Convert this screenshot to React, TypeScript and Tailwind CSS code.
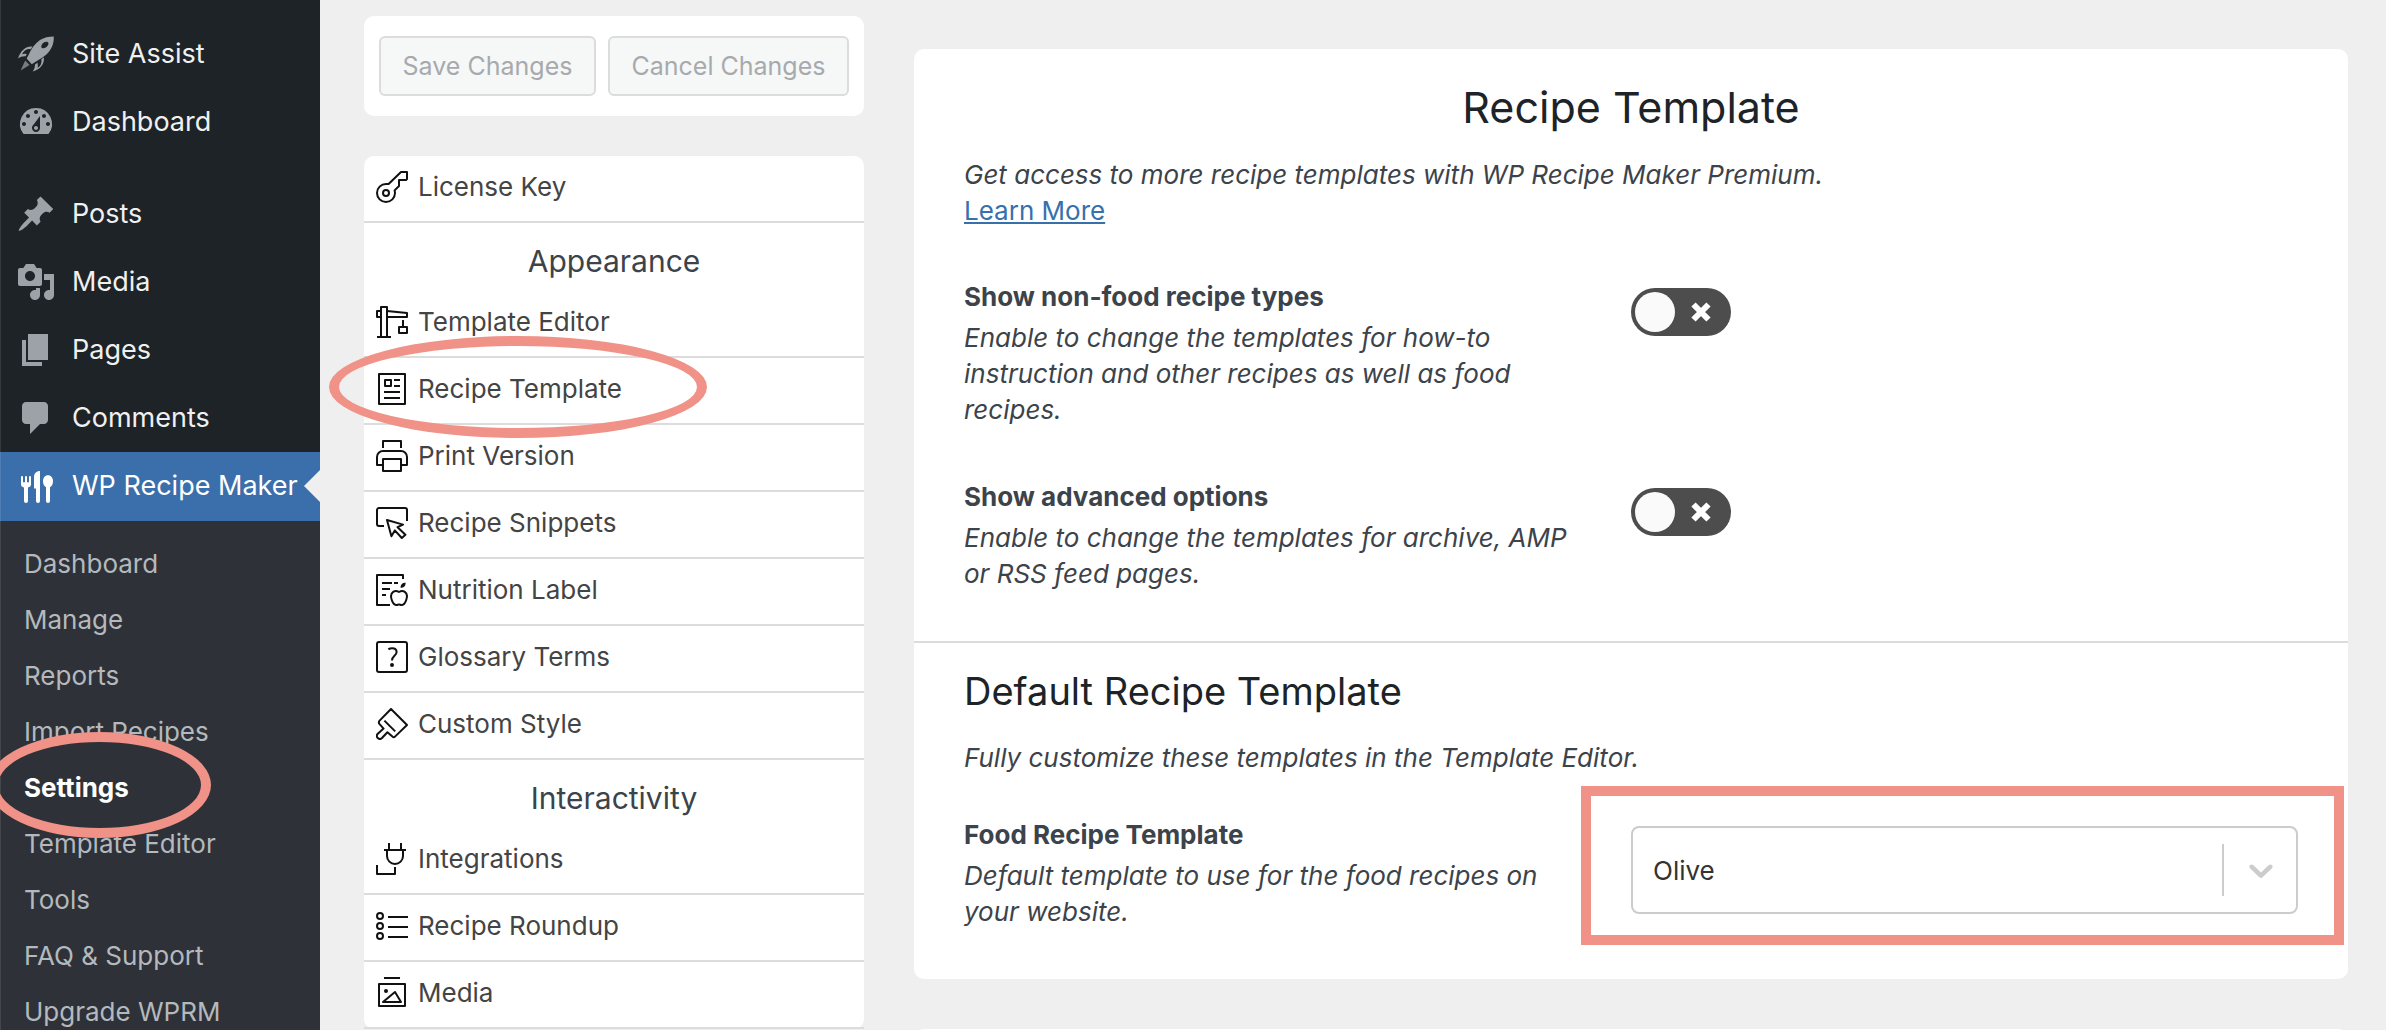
import { useState } from "react";
import type { ReactNode } from "react";

interface AdminItem {
  label: string;
  icon: ReactNode;
}

const adminIcons = {
  rocket: (
    <>
      <path
        fillRule="evenodd"
        d="M18.9 1.2c.1 4-1.3 7.3-5.2 10.2-1.2.9-3 2-4.3 2.7l-1.5 1-2.6-2.8.9-1.7C7.5 7.5 9.5 4.8 12 3c2-1.3 4.3-1.8 6.9-1.8zM15.9 4.1c-1-.5-2.3.2-2.9 1.1-.6.9-.4 1.7.2 1.9.9.3 2-.3 2.6-1.2.5-.7.6-1.5.1-1.8z"
      />
      <path d="M8.2 6.3C5.2 5.9 2.3 8.1 1 12.3c1.2-1 2.4-1.3 3.8-1.2l.6-1.1c-.9-.3-1.7-.2-2.4.1C4 8.3 5.6 7.3 7.4 7.6zM13.9 11.6c.5 3.2-1.5 5.9-5.6 7.2.8-1.1 1.2-2.3 1.2-3.6l1.2-.8c.3.9.3 1.7.1 2.5 1.6-1 2.2-2.5 1.9-4.3z" />
      <path d="M4.6 13.2l2.2 2.3-4.5 2.7z" opacity=".7" />
    </>
  ),
  dashboard: (
    <path d="M3.76 16h12.48A7.998 7.998 0 0 0 10 3a7.998 7.998 0 0 0-6.24 13zM10 4c.55 0 1 .45 1 1s-.45 1-1 1-1-.45-1-1 .45-1 1-1zM6 6c.55 0 1 .45 1 1s-.45 1-1 1-1-.45-1-1 .45-1 1-1zm8 0c.55 0 1 .45 1 1s-.45 1-1 1-1-.45-1-1 .45-1 1-1zm-5.37 5.55L12 7v6c0 1.1-.9 2-2 2s-2-.9-2-2c0-.57.24-1.08.63-1.45zM4 10c.55 0 1 .45 1 1s-.45 1-1 1-1-.45-1-1 .45-1 1-1zm12 0c.55 0 1 .45 1 1s-.45 1-1 1-1-.45-1-1 .45-1 1-1zm-5 3c0-.55-.45-1-1-1s-1 .45-1 1 .45 1 1 1 1-.45 1-1z" />
  ),
  pin: (
    <path d="M10.44 3.02l1.82-1.82 6.36 6.35-1.83 1.82c-1.05-.68-2.48-.57-3.41.36l-.75.75c-.92.93-1.04 2.35-.35 3.41l-1.83 1.82-2.41-2.41-2.8 2.79c-.42.42-3.38 2.71-3.8 2.29s1.86-3.39 2.28-3.81l2.79-2.79L4.1 9.36l1.83-1.82c1.05.69 2.48.57 3.4-.36l.75-.75c.93-.92 1.05-2.35.36-3.41z" />
  ),
  media: (
    <path d="M13 11V4c0-.55-.45-1-1-1h-1.67L9 1H5L3.67 3H2c-.55 0-1 .45-1 1v7c0 .55.45 1 1 1h10c.55 0 1-.45 1-1zM7 4.5c1.38 0 2.5 1.12 2.5 2.5S8.38 9.5 7 9.5 4.5 8.38 4.5 7 5.62 4.5 7 4.5zM14 6h5v10.5c0 1.38-1.12 2.5-2.5 2.5S14 17.88 14 16.5s1.12-2.5 2.5-2.5c.17 0 .34.02.5.05V9h-3V6zm-4 8.05V13h2v3.5c0 1.38-1.12 2.5-2.5 2.5S7 17.88 7 16.5 8.12 14 9.5 14c.17 0 .34.02.5.05z" />
  ),
  page: <path d="M6 15V2h10v13H6zm-1 1h8v2H3V5h2v11z" />,
  comments: (
    <path d="M5 2h9c1.1 0 2 .9 2 2v7c0 1.1-.9 2-2 2h-2l-5 5v-5H5c-1.1 0-2-.9-2-2V4c0-1.1.9-2 2-2z" />
  ),
  cutlery: (
    <>
      <path d="M2.5 4.6h1v3h1v-3h1v3h1v-3h1v4.2c0 .8-.6 1.4-1.5 1.4V17a1 1 0 0 1-2 0v-6.8c-.9 0-1.5-.6-1.5-1.4z" />
      <path d="M12 2v15a1 1 0 0 1-2 0v-6.2H9V5c0-1.8 1.2-3 3-3z" />
      <path d="M16 4.1c1.5 0 2.5 1.3 2.5 3 0 1.4-.6 2.5-1.5 3V17a1 1 0 0 1-2 0v-6.9c-.9-.5-1.5-1.6-1.5-3 0-1.7 1-3 2.5-3z" />
    </>
  ),
};

const topItems: AdminItem[] = [
  { label: "Site Assist", icon: adminIcons.rocket },
  { label: "Dashboard", icon: adminIcons.dashboard },
];

const contentItems: AdminItem[] = [
  { label: "Posts", icon: adminIcons.pin },
  { label: "Media", icon: adminIcons.media },
  { label: "Pages", icon: adminIcons.page },
  { label: "Comments", icon: adminIcons.comments },
];

const subItems = [
  "Dashboard",
  "Manage",
  "Reports",
  "Import Recipes",
  "Settings",
  "Template Editor",
  "Tools",
  "FAQ & Support",
  "Upgrade WPRM",
];

const appearance: AdminItem[] = [
  {
    label: "Template Editor",
    icon: (
      <>
        <path d="M2.5 15.5V.5h3v15M.5 15.5h7" />
        <path d="M2.5 2.5h-2v3h2M5.5 2.5l10 1v2h-10M13.5 7v3.5" />
        <path d="M11.5 10.5h4v3h-4z" />
      </>
    ),
  },
  {
    label: "Recipe Template",
    icon: (
      <>
        <path d="M1.5.5h13v15h-13z" />
        <path d="M4.5 3.5h3v3h-3zM9 3.5h3M9 6.5h3M4 9.5h8M4 12.5h8" />
      </>
    ),
  },
  {
    label: "Print Version",
    icon: (
      <>
        <path d="M3.5 4V.5h9V4" />
        <path d="M3.5 12.5h-3v-4a3 3 0 0 1 3-3h9a3 3 0 0 1 3 3v4h-3" />
        <path d="M3.5 9.5h9v6h-9z" />
      </>
    ),
  },
  {
    label: "Recipe Snippets",
    icon: (
      <>
        <path d="M4 9.5H1.5a1 1 0 0 1-1-1v-7a1 1 0 0 1 1-1h13a1 1 0 0 1 1 1V7" />
        <path d="M5.5 6.5l8 2.3-2.7 1.3 3.9 3.8-1.8 1.6-3.5-3.8-1.7 2.9z" />
      </>
    ),
  },
  {
    label: "Nutrition Label",
    icon: (
      <>
        <path d="M13.5 2.5v-2H.5v15H7" />
        <path d="M3 4.5h5M9 4.5h2M3 7.5h4M3 10.5h2" />
        <path d="M12.3 6.9c-.1-1.5.8-2.5 2.5-2.5.1 1.5-.9 2.5-2.5 2.5z" fill="currentColor" stroke="none" />
        <path d="M11.5 9c-1-.6-2.1-.6-2.9-.1-1.2.8-1.3 2.6-.6 4.4.6 1.5 1.4 2.3 2.3 2.2.5-.1.8-.3 1.2-.3s.7.2 1.2.3c.9.1 1.7-.7 2.3-2.2.7-1.8.6-3.6-.6-4.4-.8-.5-1.9-.5-2.9.1z" />
      </>
    ),
  },
  {
    label: "Glossary Terms",
    icon: (
      <>
        <rect x=".5" y=".5" width="15" height="15" rx="1" />
        <path d="M6.2 4.2c.5-.4 1.2-.6 1.9-.6 1.3 0 2.2.7 2.2 1.9 0 1.9-2.3 1.9-2.3 4.2" />
        <circle cx="8" cy="12" r="1" fill="currentColor" stroke="none" />
      </>
    ),
  },
  {
    label: "Custom Style",
    icon: (
      <>
        <path d="M7.5.5l8 8-6 5.8c-.4.4-.9.4-1.3 0l-2.5-2.2-2.7 2.9c-.6.6-1.5.6-2.1 0s-.6-1.5 0-2.1l2.9-2.6-2-2.2c-.5-.6-.5-1.2 0-1.8z" />
        <path d="M4.2 6.3l5.4 5.4" />
      </>
    ),
  },
];

const interactivity: AdminItem[] = [
  {
    label: "Integrations",
    icon: (
      <>
        <path d="M6.5 0v3.5M12.5 0v3.5M4 3.5h11" />
        <path d="M5.5 3.5v3a4 4 0 0 0 8 0v-3M.5 11v4.5h9V12" />
      </>
    ),
  },
  {
    label: "Recipe Roundup",
    icon: (
      <>
        <circle cx="2" cy="3" r="1.5" />
        <circle cx="2" cy="8" r="1.5" />
        <circle cx="2" cy="13" r="1.5" />
        <path d="M6 3.5h10M6 8.5h10M6 13.5h10" />
      </>
    ),
  },
  {
    label: "Media",
    icon: (
      <>
        <path d="M4 .5h8M1.5 3.5h13v11h-13z" />
        <path d="M3.5 12.5l6-5 3 5z" />
        <circle cx="5" cy="7" r="1" fill="currentColor" stroke="none" />
      </>
    ),
  },
];

const licenseIcon = (
  <>
    <path d="M12.5.5h3V4l-.5.5h-3.5v3L9.3 9.7c.1.4.2.9.2 1.3A4.5 4.5 0 1 1 5 6.5h1.3z" />
    <circle cx="5" cy="11" r="1.5" />
  </>
);

function AdminLink({ label, icon, active = false }: AdminItem & { active?: boolean }) {
  return (
    <a
      href="#"
      className={`relative flex items-center gap-4 pl-4 text-[27px]
                  ${active ? "h-[69px] bg-[#3a6fab] text-white" : "h-[68px] text-[#f0f0f1]"}`}
    >
      <svg viewBox="0 0 20 20" className={`size-10 shrink-0 fill-current ${active ? "" : "text-[#9ca2a7]"}`}>
        {icon}
      </svg>
      <span className="whitespace-nowrap">{label}</span>
      {active && (
        <svg viewBox="0 0 16 32" className="absolute top-[18px] right-0 h-8 w-4 fill-[#efefef]">
          <path d="M16 0v32L0 16z" />
        </svg>
      )}
    </a>
  );
}

function AdminMenu() {
  return (
    <nav className="relative w-[320px] shrink-0 bg-[#1d2327] pt-5">
      <div>
        {topItems.map((item) => (
          <AdminLink key={item.label} {...item} />
        ))}
      </div>
      <div className="mt-6">
        {contentItems.map((item) => (
          <AdminLink key={item.label} {...item} />
        ))}
        <AdminLink label="WP Recipe Maker" icon={adminIcons.cutlery} active />
      </div>
      <ul className="bg-[#2e3238] pt-3.5">
        {subItems.map((label) => (
          <li key={label} className="relative">
            <a
              href="#"
              className={`flex h-14 items-center pl-6 text-[26px]
                          ${label === "Settings" ? "font-bold text-white" : "text-[#b4b9be]"}`}
            >
              {label}
            </a>
            {label === "Settings" && (
              <span className="pointer-events-none absolute -top-[27px] -left-3 z-10 h-[106px] w-[223px] rounded-[50%] border-10 border-[#f09287]" />
            )}
          </li>
        ))}
      </ul>
      <span className="pointer-events-none absolute inset-y-0 left-0 w-px bg-white/10" />
    </nav>
  );
}

function SettingsLink({ label, icon }: AdminItem) {
  return (
    <li className="relative h-[67px] border-b-2 border-[#dcdcdc]">
      <a href="#" className="flex items-center gap-2.5 px-3 pt-[15px] text-[26px] leading-8 text-[#444]">
        <svg viewBox="0 0 16 16" className="size-8 fill-none stroke-current text-[#111]" strokeLinejoin="round">
          {icon}
        </svg>
        {label}
      </a>
      {label === "Recipe Template" && (
        <span className="pointer-events-none absolute -top-[22px] -left-[35px] z-10 h-[102px] w-[378px] rounded-[50%] border-10 border-[#f09287]" />
      )}
    </li>
  );
}

function SettingsGroup({ title, items }: { title: string; items: AdminItem[] }) {
  return (
    <section>
      <h2 className="flex h-[68px] items-center justify-center pt-2 text-[30px] text-[#3c434a]">{title}</h2>
      <ul>
        {items.map((item) => (
          <SettingsLink key={item.label} {...item} />
        ))}
      </ul>
    </section>
  );
}

function Toggle({ id }: { id: string }) {
  const [on, setOn] = useState(false);

  return (
    <span className="relative block h-12 w-[100px]">
      <input
        id={id}
        type="checkbox"
        checked={on}
        onChange={(e) => setOn(e.target.checked)}
        className="block h-12 w-[100px] appearance-none rounded-full bg-[#4d4d4d] checked:bg-[#3a6fab]"
      />
      <span
        className={`pointer-events-none absolute top-1 size-10 rounded-full bg-[#fafafa] ${on ? "right-1" : "left-1"}`}
      />
      {!on && (
        <svg
          viewBox="0 0 20 20"
          className="pointer-events-none absolute top-3.5 right-5 size-5 fill-none stroke-white"
          strokeWidth="6"
        >
          <path d="M2.5 2.5l15 15M17.5 2.5l-15 15" />
        </svg>
      )}
    </span>
  );
}

interface SettingProps {
  id: string;
  title: string;
  description: string;
  children: ReactNode;
}

function Setting({ id, title, description, children }: SettingProps) {
  return (
    <div className="grid grid-cols-2">
      <div className="pr-16 text-[26px] text-[#3c434a]">
        <label htmlFor={id} className="block pb-0.5 leading-[42px] font-bold">
          {title}
        </label>
        <p className="leading-9 italic">{description}</p>
      </div>
      <div className="pt-3">{children}</div>
    </div>
  );
}

function TemplateSelect({ id }: { id: string }) {
  return (
    <div className="relative">
      <select
        id={id}
        defaultValue="Olive"
        className="block h-[88px] w-full appearance-none rounded-lg border-2 border-[#ccc] bg-white pr-20 pl-5 text-[26px] text-[#333]"
      >
        <option>Olive</option>
      </select>
      <span className="pointer-events-none absolute inset-y-[18px] right-0 flex w-[76px] items-center justify-center border-l-2 border-[#ccc]">
        <svg viewBox="0 0 20 20" className="size-10 fill-[#ccc]">
          <path d="M4.516 7.548c0.436-0.446 1.043-0.481 1.576 0l3.908 3.747 3.908-3.747c0.533-0.481 1.141-0.446 1.574 0 0.436 0.445 0.408 1.197 0 1.615-0.406 0.418-4.695 4.502-4.695 4.502-0.217 0.223-0.502 0.335-0.787 0.335s-0.57-0.112-0.789-0.335c0 0-4.287-4.084-4.695-4.502s-0.436-1.17 0-1.615z" />
        </svg>
      </span>
      <span className="pointer-events-none absolute -top-10 -right-[46px] -bottom-[31px] -left-[50px] border-10 border-[#f09287]" />
    </div>
  );
}

export default function App() {
  return (
    <div className="flex h-screen overflow-hidden bg-[#efefef] font-['Inter','Liberation_Sans',sans-serif]">
      <AdminMenu />

      <main className="flex min-w-0 flex-1 items-start gap-[50px] pr-[38px] pl-11">
        <div className="w-[500px] shrink-0 pt-4">
          <div className="flex gap-3 rounded-[10px] bg-white px-[15px] py-5">
            <button
              disabled
              className="h-[60px] w-[217px] rounded-md border-2 border-[#dcdcdc] bg-[#f6f7f7] pt-0.5 text-[25px] whitespace-nowrap text-[#a7aaad]"
            >
              Save Changes
            </button>
            <button
              disabled
              className="h-[60px] flex-1 rounded-md border-2 border-[#dcdcdc] bg-[#f6f7f7] pt-0.5 text-[25px] whitespace-nowrap text-[#a7aaad]"
            >
              Cancel Changes
            </button>
          </div>

          <div className="mt-10 rounded-[10px] bg-white">
            <ul>
              <SettingsLink label="License Key" icon={licenseIcon} />
            </ul>
            <SettingsGroup title="Appearance" items={appearance} />
            <SettingsGroup title="Interactivity" items={interactivity} />
          </div>
        </div>

        <div className="flex min-w-0 flex-1 flex-col gap-[50px] pt-[49px]">
          <div className="rounded-[10px] bg-white">
            <section className="border-b-2 border-[#dcdcdc] px-[50px] pt-7 pb-[49px]">
              <h1 className="text-center text-[43px] leading-[60px] text-[#1d2327]">Recipe Template</h1>
              <p className="pt-5 text-[26px] leading-9 text-[#3c434a] italic">
                Get access to more recipe templates with WP Recipe Maker Premium.
              </p>
              <p className="text-[26px] leading-9">
                <a href="#" className="text-[#3670ad] underline">
                  Learn More
                </a>
              </p>
              <div className="flex flex-col gap-12 pt-[47px]">
                <Setting
                  id="non-food"
                  title="Show non-food recipe types"
                  description="Enable to change the templates for how-to instruction and other recipes as well as food recipes."
                >
                  <Toggle id="non-food" />
                </Setting>
                <Setting
                  id="advanced"
                  title="Show advanced options"
                  description="Enable to change the templates for archive, AMP or RSS feed pages."
                >
                  <Toggle id="advanced" />
                </Setting>
              </div>
            </section>

            <section className="px-[50px] pt-[23px] pb-[49px]">
              <h2 className="text-[38px] leading-[50px] text-[#1d2327]">Default Recipe Template</h2>
              <p className="pt-6 text-[26px] leading-9 text-[#3c434a] italic">
                Fully customize these templates in the Template Editor.
              </p>
              <div className="pt-[38px]">
                <Setting
                  id="food-template"
                  title="Food Recipe Template"
                  description="Default template to use for the food recipes on your website."
                >
                  <TemplateSelect id="food-template" />
                </Setting>
              </div>
            </section>
          </div>

          <div className="h-40 shrink-0 rounded-[10px] bg-white" />
        </div>
      </main>
    </div>
  );
}
